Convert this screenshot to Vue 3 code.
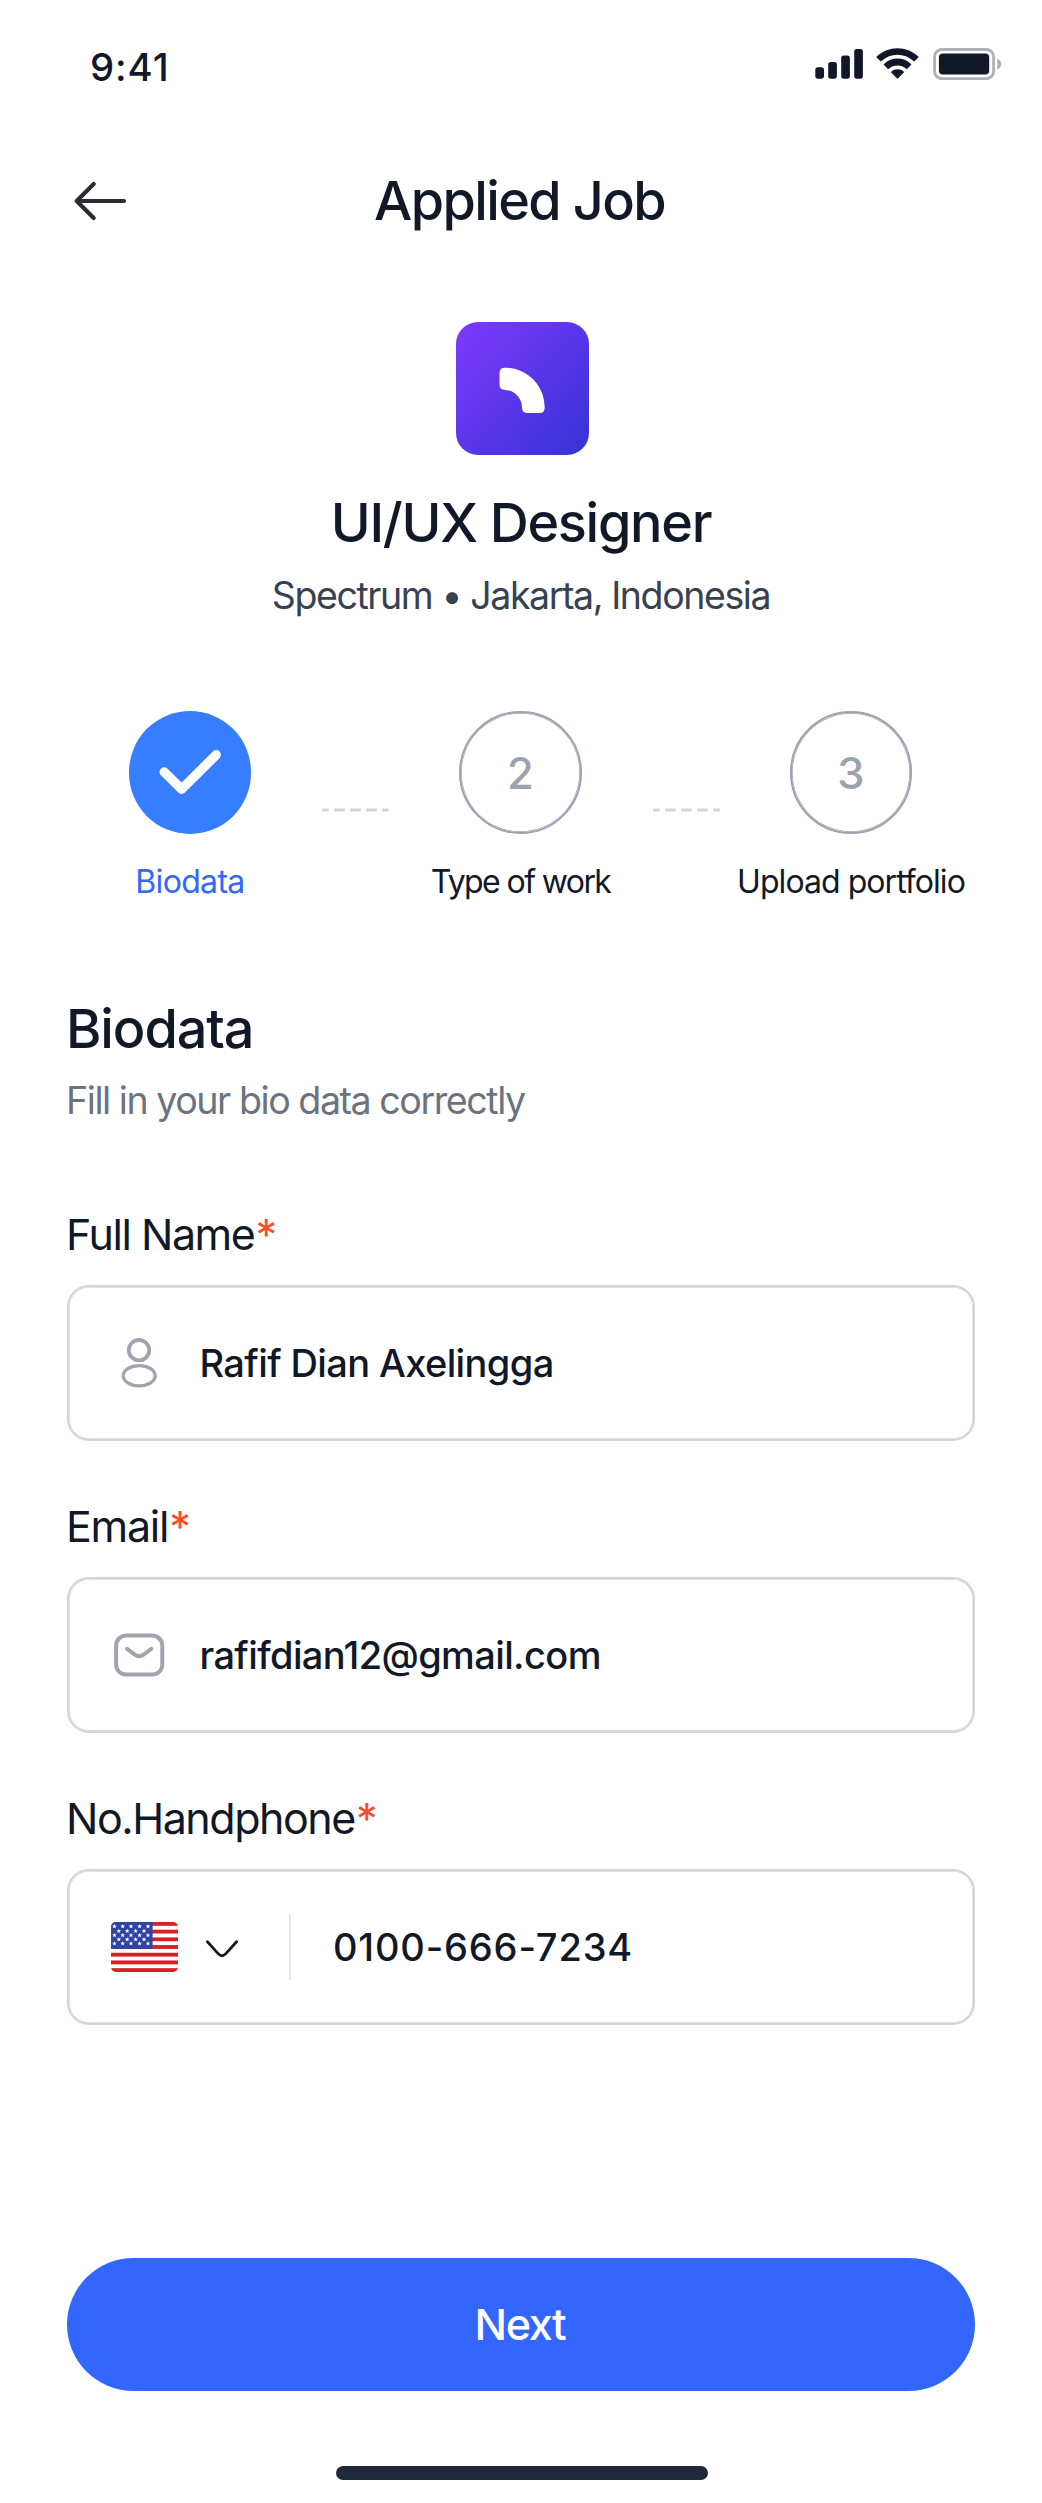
<script setup>
const steps = [
  { id: 1, label: 'Biodata', done: true, track: '-0.68px' },
  { id: 2, label: 'Type of work', done: false, track: '-1.6px' },
  { id: 3, label: 'Upload portfolio', done: false, track: '-0.95px' }
]

// Star centres of the flag canton: five rows alternating five and four stars
const stars = [4.4, 9, 13.2, 17.4, 21.5].flatMap((y, row) =>
  (row % 2 ? [7.8, 16.2, 24.6, 33] : [3.4, 11.7, 20, 28.6, 37]).map((x) => ({ x, y }))
)
const stripes = [0, 2, 4, 6, 8, 10, 12]
</script>

<template>
  <main class="screen">
    <header class="status">
      <span class="time">9:41</span>
      <div class="indicators">
        <svg class="signal" width="48" height="31" viewBox="0 0 48 31">
          <rect x="0.3" y="19.3" width="8.7" height="11.4" rx="2.6" />
          <rect x="13.2" y="14" width="8.7" height="16.7" rx="2.6" />
          <rect x="26.2" y="7.5" width="8.7" height="23.2" rx="2.6" />
          <rect x="39.2" y="1" width="8.7" height="29.7" rx="2.6" />
        </svg>
        <svg class="wifi" width="43" height="31" viewBox="0 0 43 31">
          <path d="M0.7 8.4 C12.4 -2.6 30.6 -2.6 42.3 8.4 Q42.8 9 42.3 9.5 L38.8 13.1 Q38.2 13.6 37.6 13.1 C28.5 4.5 14.5 4.5 5.4 13.1 Q4.8 13.6 4.2 13.1 L0.7 9.5 Q0.2 9 0.7 8.4Z" />
          <path d="M8 16 C15.6 8.7 27.4 8.7 35 16 Q35.5 16.6 35 17.1 L31.3 20.8 Q30.7 21.3 30.1 20.8 C25.2 16.4 17.8 16.4 12.9 20.8 Q12.3 21.3 11.7 20.8 L8 17.1 Q7.5 16.6 8 16Z" />
          <path d="M15.4 23.6 C18.8 20.4 24.2 20.4 27.6 23.6 Q28.2 24.2 27.6 24.8 L22.1 30.2 Q21.5 30.7 20.9 30.2 L15.4 24.8 Q14.8 24.2 15.4 23.6Z" />
        </svg>
        <svg class="battery" width="69" height="32" viewBox="0 0 69 32">
          <rect x="1.6" y="1.5" width="59" height="29.2" rx="7.2" fill="none" stroke="#afb1b5" stroke-width="2.8" />
          <rect x="5.9" y="5.6" width="50.3" height="20.9" rx="4" />
          <path d="M64.2 10.7 Q68.3 12.3 68.3 16.1 Q68.3 19.9 64.2 21.5Z" fill="#afb1b5" />
        </svg>
      </div>
    </header>

    <nav class="topbar">
      <svg class="back" width="56" height="42" viewBox="0 0 56 42" fill="none" stroke="#292d32" stroke-width="4.2" stroke-linecap="round" stroke-linejoin="round">
        <path d="M21.7 4.1 L4.7 21 L21.7 37.9 M5.3 21 H52" />
      </svg>
      <h1 class="title">Applied Job</h1>
    </nav>

    <section class="job">
      <svg class="logo" width="133" height="133" viewBox="0 0 133 133">
        <defs>
          <linearGradient id="brand" x1="0.06" y1="0.14" x2="0.9" y2="0.88">
            <stop offset="0" stop-color="#7839fa" />
            <stop offset="1" stop-color="#3d33d9" />
          </linearGradient>
        </defs>
        <rect width="133" height="133" rx="22" fill="url(#brand)" />
        <path fill="#fff" d="M43.5 51 Q43.5 45.7 49 45.7 C71 45.7 88.7 63.5 88.7 85.5 Q88.7 91 83.5 91 H71.5 Q66 91 66 85.5 C66 76 58.5 68.3 49 68 Q43.5 67.8 43.5 62.6Z" />
      </svg>
      <h2 class="role">UI/UX Designer</h2>
      <p class="company">Spectrum • Jakarta, Indonesia</p>
    </section>

    <ol class="steps">
      <template v-for="step in steps" :key="step.id">
        <li v-if="step.id > 1" class="connector">
          <svg width="68" height="4" viewBox="0 0 68 4" stroke="#d1d5db" stroke-width="2.8">
            <path d="M0.2 2 H6.7 M12.2 2 H22.7 M28.2 2 H38.7 M44.2 2 H54.7 M60.2 2 H66.7" />
          </svg>
        </li>
        <li class="step" :class="{ done: step.done }">
          <span class="bubble">
            <svg v-if="step.done" width="122" height="122" viewBox="0 0 122 122" fill="none" stroke="#fff" stroke-width="9.4" stroke-linecap="round" stroke-linejoin="round">
              <path d="M35.2 61 L52.6 78.2 L87.2 43.8" />
            </svg>
            <template v-else>{{ step.id }}</template>
          </span>
          <span class="label" :style="{ letterSpacing: step.track }">{{ step.label }}</span>
        </li>
      </template>
    </ol>

    <section class="form">
      <h2 class="heading">Biodata</h2>
      <p class="hint">Fill in your bio data correctly</p>

      <div class="field">
        <div class="caption">Full Name<span class="req">*</span></div>
        <div class="box">
          <svg class="icon" width="54" height="54" viewBox="0 0 54 54" fill="none" stroke="#9fa4af">
            <circle cx="27" cy="14.2" r="10.2" stroke-width="3.8" />
            <ellipse cx="27.2" cy="39.8" rx="16" ry="10.1" stroke-width="3.3" />
          </svg>
          <span class="value">Rafif Dian Axelingga</span>
        </div>
      </div>

      <div class="field">
        <div class="caption email">Email<span class="req">*</span></div>
        <div class="box">
          <svg class="icon" width="54" height="54" viewBox="0 0 54 54" fill="none" stroke="#9fa4af" stroke-width="4" stroke-linecap="round">
            <rect x="4.1" y="7.6" width="46.2" height="39" rx="10" />
            <path d="M15.1 20.8 L22.8 26.6 Q27.2 29.6 31.6 26.6 L39.3 20.8" />
          </svg>
          <span class="value">rafifdian12@gmail.com</span>
        </div>
      </div>

      <div class="field">
        <div class="caption">No.Handphone<span class="req">*</span></div>
        <div class="box phone">
          <svg class="flag" width="67" height="50" viewBox="0 0 67 50">
            <defs>
              <clipPath id="flag-shape"><rect width="67" height="50" rx="5" /></clipPath>
              <path id="star" d="M0 -2.4 L0.6 -0.8 L2.3 -0.75 L1 0.3 L1.45 1.95 L0 1.05 L-1.45 1.95 L-1 0.3 L-2.3 -0.75 L-0.6 -0.8Z" fill="#fff" />
            </defs>
            <g clip-path="url(#flag-shape)">
              <rect width="67" height="50" fill="#fff" />
              <rect v-for="s in stripes" :key="s" x="0" :y="s * 3.846" width="67" height="3.846" fill="#dc1f26" />
              <rect width="41.6" height="26.9" fill="#2f44a3" />
              <use v-for="(s, i) in stars" :key="i" href="#star" :x="s.x" :y="s.y" />
            </g>
          </svg>
          <svg class="chevron" width="34" height="20" viewBox="0 0 34 20" fill="none" stroke="#111827" stroke-width="2.8" stroke-linecap="round">
            <path d="M2.4 2.8 L13.6 15.1 Q17 18.4 20.4 15.1 L31.6 2.8" />
          </svg>
          <span class="divider"></span>
          <span class="value number">0100-666-7234</span>
        </div>
      </div>
    </section>

    <button class="next" type="button">Next</button>
    <div class="home"></div>
  </main>
</template>

<style>
body {
  margin: 0;
  background: #fff;
}
</style>

<style scoped>
.screen {
  display: flex;
  flex-direction: column;
  width: 1042px;
  height: 2503px;
  overflow: hidden;
  background: #fff;
  color: #111827;
  font-family: Inter, "Liberation Sans", sans-serif;
}

h1,
h2,
p,
ol {
  margin: 0;
  padding: 0;
}

svg {
  display: block;
  flex: none;
}

.status {
  display: flex;
  justify-content: space-between;
  height: 133px;
  padding: 0 41px 0 90px;
}

.time {
  font-size: 38.4px;
  font-weight: 500;
  line-height: 134px;
  letter-spacing: 0.9px;
}

.indicators {
  display: flex;
  padding-top: 48px;
  fill: #111827;
}

.wifi {
  margin-left: 13px;
}

.battery {
  margin-left: 14px;
  margin-right: -1px;
}

.signal {
  margin-left: 0;
}

.topbar {
  display: grid;
  grid-template-columns: 58px 1fr 61px;
  align-items: center;
  height: 134px;
  padding: 0 72px;
}

.title {
  text-align: center;
  font-size: 54px;
  font-weight: 500;
  line-height: 136px;
  letter-spacing: -1.64px;
}

.job {
  display: flex;
  flex-direction: column;
  align-items: center;
  margin-top: 55px;
}

.logo {
  margin-left: 2px;
}

.role {
  margin-top: 35px;
  font-size: 54px;
  font-weight: 500;
  line-height: 66px;
  letter-spacing: -1.31px;
}

.company {
  margin-top: 15px;
  color: #374151;
  font-size: 37.5px;
  line-height: 50px;
  letter-spacing: -1.41px;
}

.steps {
  display: flex;
  margin-top: 90px;
  padding-left: 58px;
  list-style: none;
}

.step {
  display: flex;
  flex-direction: column;
  align-items: center;
  width: 264px;
}

.bubble {
  box-sizing: border-box;
  width: 122.5px;
  height: 122.5px;
  border: 2px solid #9ca3af;
  box-shadow: inset 0 0 0 0.7px #9ca3af;
  border-radius: 50%;
  color: #9ca3af;
  font-size: 43.5px;
  font-weight: 500;
  line-height: 120px;
  text-align: center;
}

.done .bubble {
  border: 0;
  box-shadow: none;
  background: #377dff;
}

.label {
  margin-top: 26px;
  font-size: 32px;
  line-height: 44px;
  white-space: nowrap;
}

.done .label {
  color: #3366ff;
}

.connector {
  width: 66.5px;
  padding-top: 96.5px;
}

.form {
  margin: 92.5px 67px 0;
}

.heading,
.hint,
.caption {
  margin-left: -1px;
}

.heading {
  font-size: 54px;
  font-weight: 500;
  line-height: 66px;
  letter-spacing: -1.1px;
}

.hint {
  margin-top: 14px;
  color: #6b7280;
  font-size: 37.6px;
  line-height: 50px;
  letter-spacing: -1.45px;
}

.field {
  margin-top: 57.8px;
}

.hint + .field {
  margin-top: 81px;
}

.caption {
  font-size: 43px;
  line-height: 54px;
  letter-spacing: -1.46px;
}

.caption.email {
  letter-spacing: -1.27px;
}

.req {
  margin-left: 1px;
  color: #fb4a2c;
}

.box {
  box-sizing: border-box;
  display: flex;
  align-items: center;
  height: 155.8px;
  margin-top: 24.2px;
  padding-left: 42px;
  border: 2px solid #d1d5db;
  box-shadow: inset 0 0 0 0.7px #d1d5db;
  border-radius: 22px;
}

.icon {
  margin: 0 -1px 0 1px;
}

.value {
  margin-left: 34.5px;
  font-size: 38px;
  font-weight: 500;
  line-height: 50px;
  letter-spacing: -0.62px;
}

.phone .flag {
  margin-top: 1px;
}

.chevron {
  margin: 4px 0 0 27px;
}

.divider {
  width: 2px;
  height: 66px;
  margin: 1px 0 0 50px;
  background: #e5e7eb;
}

.number {
  margin-left: 42px;
  letter-spacing: 0.83px;
}

.next {
  height: 133.4px;
  margin: 233px 67px 0;
  padding: 0 2px 0 0;
  border: 0;
  border-radius: 67px;
  background: #3366ff;
  color: #fff;
  font: 500 43px/133px Inter, "Liberation Sans", sans-serif;
  letter-spacing: -1.36px;
}

.home {
  align-self: center;
  width: 372px;
  height: 14px;
  margin: 75px 0 0 2px;
  border-radius: 7px;
  background: #1f2937;
}
</style>
